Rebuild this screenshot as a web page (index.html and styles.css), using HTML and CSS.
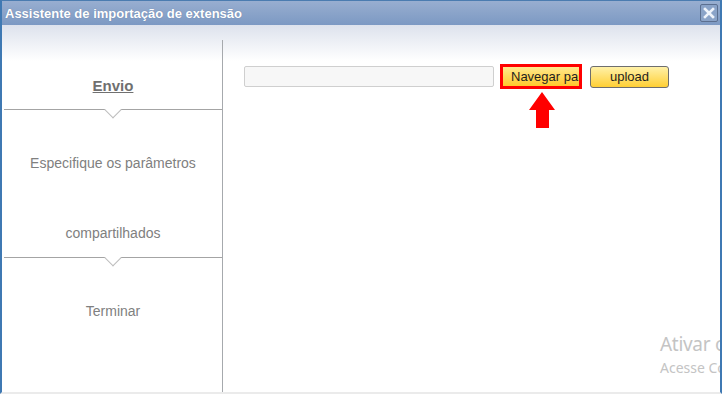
FILE: index.html
```html
<!DOCTYPE html>
<html lang="pt-BR">
<head>
    <meta charset="UTF-8">
    <meta name="viewport" content="width=device-width, initial-scale=1.0">
    <title>Assistente de importação de extensão</title>
    <link rel="stylesheet" href="styles.css">
</head>
<body>
    <div class="window">
        <div class="titlebar">
            <span class="title">Assistente de importação de extensão</span>
            <button class="close" title="Fechar">
                <svg width="12" height="12" viewBox="0 0 12 12">
                    <path d="M2 2 L10 10 M10 2 L2 10" stroke="#eef3fb" stroke-width="2.6" stroke-linecap="square"/>
                </svg>
            </button>
        </div>

        <div class="content">
            <div class="sidebar">
                <div class="step step-upload">
                    <span class="step-label current">Envio</span>
                </div>
                <div class="step step-params">
                    <span class="step-label">Especifique os parâmetros compartilhados</span>
                </div>
                <div class="step step-finish">
                    <span class="step-label">Terminar</span>
                </div>
            </div>

            <div class="main">
                <div class="upload-row">
                    <input type="text" class="file-field" readonly>
                    <div class="highlight">
                        <button class="btn btn-browse">Navegar para</button>
                        <svg class="arrow" width="26" height="36" viewBox="0 0 26 36">
                            <polygon points="13,0 26,18 20,18 20,36 7,36 7,18 0,18" fill="#ff0000"/>
                        </svg>
                    </div>
                    <button class="btn btn-upload">upload</button>
                </div>
            </div>
        </div>

        <div class="watermark">
            <div class="watermark-title">Ativar o Windows</div>
            <div class="watermark-text">Acesse Configurações para ativar o Windows.</div>
        </div>
    </div>
</body>
</html>
```

FILE: styles.css
```css
body {
    margin: 0;
    font-family: "Liberation Sans", Arial, sans-serif;
    background-color: #fff;
}
.window {
    position: relative;
    width: 722px;
    height: 394px;
    box-sizing: border-box;
    display: flex;
    flex-direction: column;
    overflow: hidden;
    border-top: 1px solid #4b7cb0;
    border-left: 2px solid #3f79b3;
    border-right: 2px solid #3f79b3;
    border-bottom: 2px solid #ebebeb;
}
.titlebar {
    height: 24px;
    flex: none;
    display: flex;
    align-items: center;
    justify-content: space-between;
    padding: 0 2px 0 3px;
    background: linear-gradient(#98aed0, #7c99c3);
}
.title {
    color: #fff;
    font-size: 13px;
    font-weight: bold;
    text-shadow: 0 0 1px rgba(40, 60, 100, 0.4);
}
.close {
    width: 18px;
    height: 18px;
    padding: 0;
    display: flex;
    align-items: center;
    justify-content: center;
    background-color: #8aa3c8;
    border: 1px solid #5b6f90;
    border-radius: 2px;
    cursor: pointer;
}
.content {
    flex: 1;
    display: flex;
    padding-top: 15px;
    background: linear-gradient(#dde2ed 0, #fff 36px);
}
.sidebar {
    width: 220px;
    flex: none;
    border-right: 1px solid #a6a9ad;
}
.step {
    position: relative;
    margin-left: 2px;
    text-align: center;
    font-size: 14px;
    line-height: 20px;
    color: #808080;
}
.step-upload,
.step-params {
    border-bottom: 1px solid #a4a4a4;
}
.step-upload::after,
.step-params::after {
    content: "";
    position: absolute;
    left: calc(50% - 6px);
    bottom: -7px;
    width: 12px;
    height: 12px;
    box-sizing: border-box;
    background-color: #fff;
    border-right: 1px solid #bdbdbd;
    border-bottom: 1px solid #bdbdbd;
    transform: rotate(45deg);
}
.step-upload {
    padding: 36px 0 13px;
}
.step-params {
    height: 129px;
    padding-top: 18px;
    line-height: 70px;
}
.step-finish {
    padding-top: 43px;
}
.current {
    font-size: 15px;
    font-weight: bold;
    color: #707070;
    text-decoration: underline;
}
.main {
    flex: 1;
    padding: 24px 0 0 21px;
}
.upload-row {
    display: flex;
    align-items: center;
}
.file-field {
    width: 250px;
    height: 21px;
    margin: 0;
    padding: 0;
    box-sizing: border-box;
    background-color: #f7f7f7;
    border: 1px solid #cfcfcf;
    border-radius: 2px;
}
.highlight {
    position: relative;
    display: flex;
    margin-left: 6px;
    border: 3px solid #ff0000;
}
.btn {
    margin: 0;
    font-family: "Liberation Sans", Arial, sans-serif;
    font-size: 13px;
    color: #1e1e1e;
    cursor: pointer;
}
.btn-browse {
    width: 76px;
    height: 19px;
    padding: 0 0 0 8px;
    border: none;
    text-align: left;
    white-space: nowrap;
    overflow: hidden;
    background: linear-gradient(#ffe88c, #ffc92c);
}
.btn-upload {
    width: 79px;
    height: 22px;
    margin-left: 8px;
    padding: 0;
    border: 1px solid #6e6e6e;
    border-radius: 3px;
    background: linear-gradient(#fff1a8, #ffcf35);
}
.arrow {
    position: absolute;
    top: calc(100% + 6px);
    left: 26px;
}
.watermark {
    position: absolute;
    left: 658px;
    top: 330px;
    white-space: nowrap;
    font-family: "Noto Sans", sans-serif;
    color: #c4c4c4;
}
.watermark-title {
    font-size: 19px;
    line-height: 27px;
    letter-spacing: -0.3px;
}
.watermark-text {
    font-size: 14px;
    line-height: 20px;
}
```
